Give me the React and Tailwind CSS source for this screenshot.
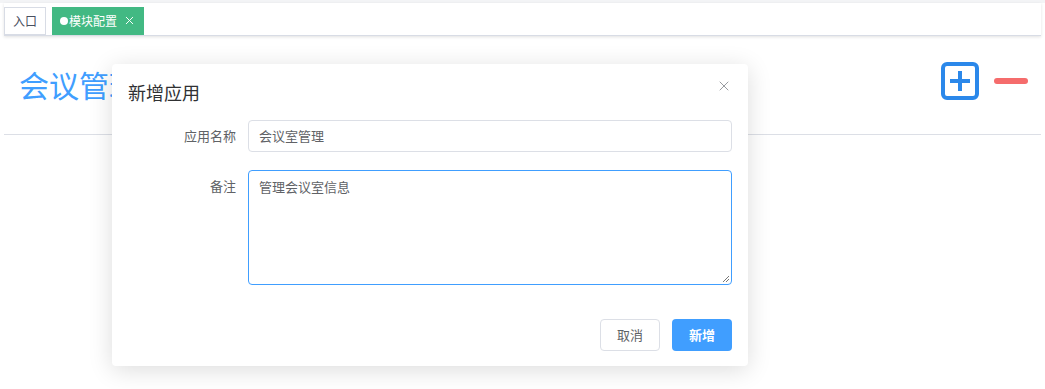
import React from 'react';
import { X } from 'lucide-react';

const font = { fontFamily: '"Noto Sans CJK SC", "Noto Sans", sans-serif' };

function TagsBar() {
  return (
    <div className="border-t-[3px] border-[#f3f4f6]">
      <div className="mx-[4px] flex h-[33px] items-center gap-[6px] border-b border-[#d8dce5] bg-white pt-[3px] shadow-[0_1px_3px_0_rgba(0,0,0,0.12)]">
        <div className="flex h-[28px] w-[42px] items-center justify-center border border-[#d8dce5] bg-white text-[12px] text-[#495060]">
          入口
        </div>
        <div className="flex h-[28px] w-[92px] items-center gap-[1px] bg-[#42b983] pl-[8px] text-[12px] text-white">
          <span className="h-[8px] w-[8px] rounded-full bg-white" />
          <span>模块配置</span>
          <X className="ml-[5px] h-[13px] w-[13px]" strokeWidth={1.8} />
        </div>
      </div>
    </div>
  );
}

function ToolIcons() {
  return (
    <div className="mt-[-6px] flex items-center gap-[15px]">
      <svg width="38" height="38" viewBox="0 0 38 38">
        <rect x="2" y="2" width="34" height="34" rx="4" fill="none" stroke="#2b88ea" strokeWidth="4" />
        <path d="M19 9v20M9 19h20" stroke="#2b88ea" strokeWidth="4" />
      </svg>
      <div className="h-[6px] w-[34px] rounded-full bg-[#f56c6c]" />
    </div>
  );
}

function Dialog() {
  return (
    <div className="absolute left-[112px] top-[64px] w-[636px] rounded-[4px] bg-white shadow-[0_4px_24px_rgba(0,0,0,0.14)]">
      <div className="flex items-center justify-between px-[16px] pt-[15px]">
        <span className="text-[18px] leading-[26px] text-[#303133]">新增应用</span>
        <X className="mr-[0px] mt-[-12px] h-[16px] w-[16px] text-[#909399]" strokeWidth={1.4} />
      </div>
      <div className="mt-[15px] flex flex-col gap-[18px] pr-[16px]">
        <div className="flex items-center">
          <label className="w-[136px] pr-[12px] text-right text-[13px] text-[#606266]">应用名称</label>
          <div className="flex h-[32px] flex-1 items-center rounded-[4px] border border-[#dcdfe6] px-[10px] text-[13px] text-[#606266]">
            会议室管理
          </div>
        </div>
        <div className="flex items-start">
          <label className="w-[136px] pr-[12px] pt-[6px] text-right text-[13px] text-[#606266]">备注</label>
          <div className="relative h-[115px] flex-1 rounded-[4px] border border-[#409eff] px-[10px] pt-[6px] text-[13px] text-[#606266]">
            管理会议室信息
            <svg className="absolute bottom-[1px] right-[1px]" width="8" height="8" viewBox="0 0 8 8">
              <path d="M7 1L1 7M7 4L4 7" stroke="#777" strokeWidth="1" />
            </svg>
          </div>
        </div>
      </div>
      <div className="flex justify-end gap-[12px] px-[16px] pb-[15px] pt-[34px]">
        <button className="h-[32px] w-[60px] rounded-[4px] border border-[#dcdfe6] bg-white text-[13px] text-[#606266]">取消</button>
        <button className="h-[32px] w-[60px] rounded-[4px] bg-[#409eff] text-[13px] font-bold text-white">新增</button>
      </div>
    </div>
  );
}

export default function App() {
  return (
    <div className="relative h-[389px] w-[1045px] overflow-hidden bg-white" style={font}>
      <TagsBar />
      <div className="mx-[4px] mt-[24px] flex items-center justify-between border-b border-[#dcdfe6] pb-[26px] pl-[15px] pr-[13px]">
        <h1 className="text-[30px] leading-[48px] text-[#409eff]">会议管理</h1>
        <ToolIcons />
      </div>
      <Dialog />
    </div>
  );
}
